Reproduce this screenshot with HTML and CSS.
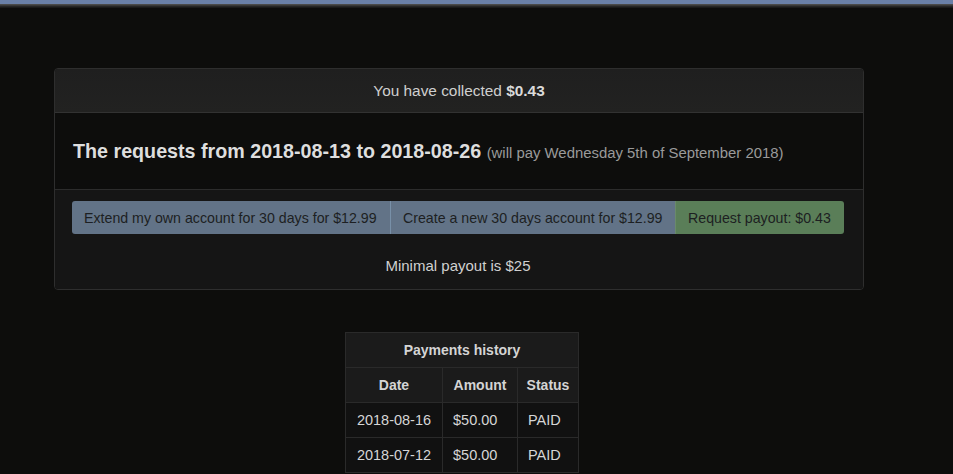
FILE: index.html
```html
<!DOCTYPE html>
<html>
<head>
<meta charset="utf-8">
<link rel="stylesheet" href="styles.css">
</head>
<body>
<div class="topbar"></div>
<div class="container">
  <div class="panel">
    <div class="panel-heading">You have collected <b>$0.43</b></div>
    <div class="panel-body">
      <h3 class="period">The requests from 2018-08-13 to 2018-08-26 <small>(will pay Wednesday 5th of September 2018)</small></h3>
    </div>
    <div class="panel-footer">
      <div class="btn-group">
        <button class="btn btn-blue">Extend my own account for 30 days for $12.99</button>
        <button class="btn btn-blue">Create a new 30 days account for $12.99</button>
        <button class="btn btn-green">Request payout: $0.43</button>
      </div>
      <p class="minimal">Minimal payout is $25</p>
    </div>
  </div>
  <table class="history">
    <thead>
      <tr><th colspan="3">Payments history</th></tr>
      <tr><th class="c-date">Date</th><th class="c-amt">Amount</th><th class="c-st">Status</th></tr>
    </thead>
    <tbody>
      <tr><td>2018-08-16</td><td class="l">$50.00</td><td class="l">PAID</td></tr>
      <tr><td>2018-07-12</td><td class="l">$50.00</td><td class="l">PAID</td></tr>
    </tbody>
  </table>
</div>
</body>
</html>
```
FILE: styles.css
```css
html, body {
  margin: 0;
  padding: 0;
  background: #0d0d0c;
  font-family: "Liberation Sans", Arial, sans-serif;
  color: #d0d0d0;
  font-size: 14px;
  overflow: hidden;
  height: 474px;
}
.topbar {
  height: 4px;
  background: #6a80a8;
  box-shadow: 0 1px 0 #4a4a4a, 0 2px 0 #383838, 0 3px 0 #262626, 0 4px 0 #1a1a1a;
}
.container {
  width: 810px;
  margin-left: 54px;
  padding-top: 64px;
}
.panel {
  border: 1px solid #2e2e2e;
  border-radius: 4px;
  background: #0d0d0c;
  overflow: hidden;
}
.panel-heading {
  height: 43px;
  line-height: 43px;
  text-align: center;
  background: linear-gradient(#1f1f1f, #222221);
  border-bottom: 1px solid #323232;
  font-size: 15.4px;
  color: #cfcfcf;
}
.panel-heading b { color: #dadada; }
.panel-body {
  height: 76px;
  display: flex;
  align-items: center;
  padding: 0 18px;
  border-bottom: 1px solid #2c2c2c;
}
.period {
  margin: 1px 0 0;
  font-size: 19.7px;
  font-weight: bold;
  color: #dedede;
}
.period small {
  font-size: 14.9px;
  font-weight: normal;
  color: #9a9a9a;
}
.panel-footer {
  background: #151515;
  padding: 11px 19px 0 17px;
  height: 88px;
}
.btn-group {
  display: flex;
  height: 33px;
}
.btn {
  border: 0;
  margin: 0;
  font-family: inherit;
  font-size: 14.2px;
  color: #1d1f22;
  padding: 0 0 0 12px;
  height: 33px;
  white-space: nowrap;
  text-align: left;
  cursor: pointer;
}
.btn-blue { background: #627387; }
.btn-blue:first-child {
  border-radius: 3px 0 0 3px;
  width: 318px;
}
.btn-blue + .btn-blue {
  border-left: 1px solid #7890a8;
  width: 285px;
}
.btn-green {
  background: #5a7e58;
  border-left: 1px solid #6a8a6a;
  border-radius: 0 3px 3px 0;
  flex: 1;
}
.minimal {
  margin: 0;
  padding-top: 23px;
  text-align: center;
  font-size: 15px;
  color: #d0d0d0;
}
.history {
  margin: 42px 0 0 291px;
  border-collapse: collapse;
  font-size: 14.5px;
}
.history th, .history td {
  border: 1px solid #2a2a2a;
  height: 34px;
  padding: 0;
}
.history th {
  background: #1b1b1b;
  color: #d4d4d4;
  font-weight: bold;
  font-size: 14px;
}
.history td {
  background: #111111;
  color: #d6d6d6;
  text-align: center;
}
.history td.l { text-align: left; padding-left: 10px; }
.c-date { width: 96px; }
.c-amt { width: 74px; }
.c-st { width: 60px; }
```
